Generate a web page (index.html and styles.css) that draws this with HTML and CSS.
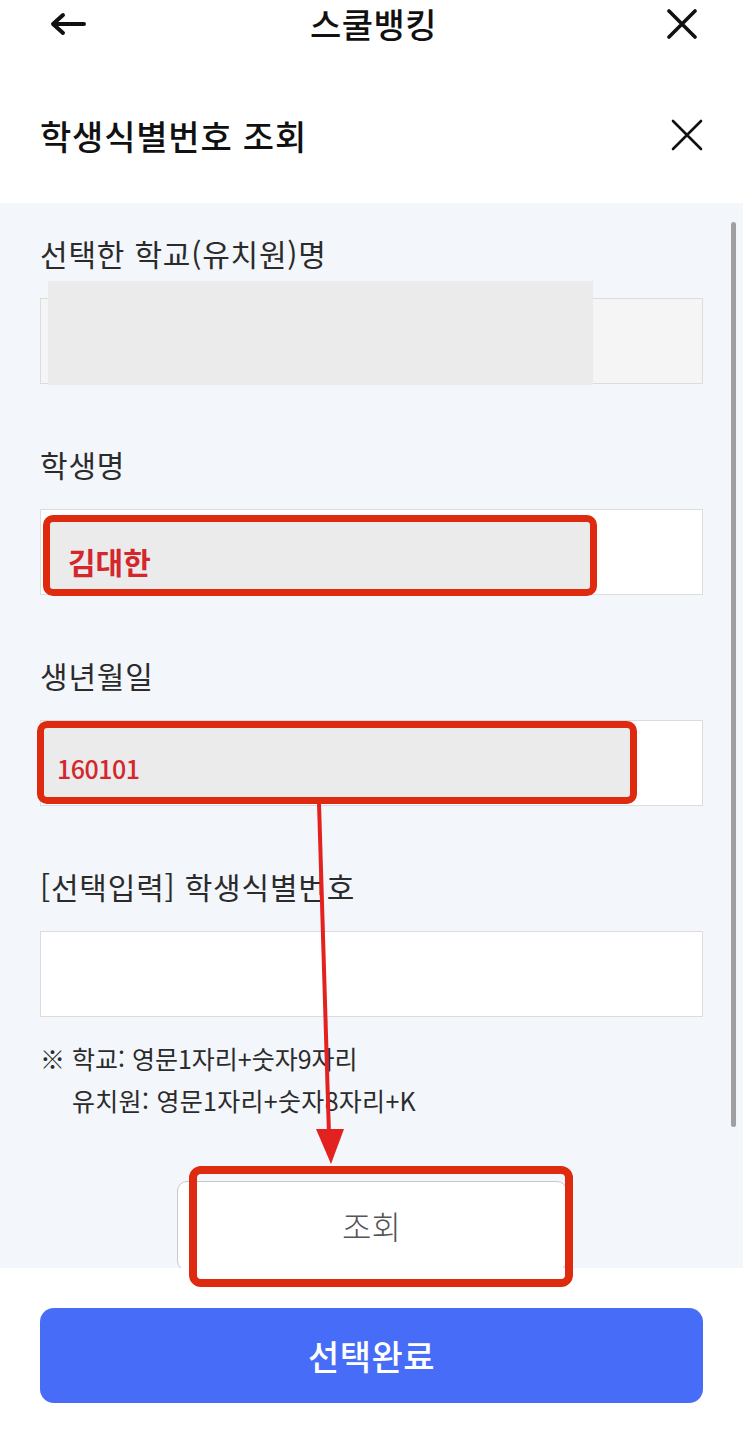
FILE: index.html
```html
<!DOCTYPE html>
<html lang="ko">
<head>
    <meta charset="UTF-8">
    <meta name="viewport" content="width=device-width, initial-scale=1.0">
    <title>스쿨뱅킹</title>
    <link rel="stylesheet" href="styles.css">
</head>
<body>
    <div class="page">
        <!-- Top bar -->
        <div class="topbar">
            <span class="icon-left">
                <svg width="36" height="24" viewBox="0 0 36 24"><path d="M34 12H4M13 3L3 12l10 9" fill="none" stroke="#111" stroke-width="4" stroke-linecap="round" stroke-linejoin="round"/></svg>
            </span>
            <h1 class="app-title">스쿨뱅킹</h1>
            <span class="icon-right">
                <svg width="30" height="30" viewBox="0 0 30 30"><path d="M2 2L28 28M28 2L2 28" stroke="#111" stroke-width="3.6" stroke-linecap="round"/></svg>
            </span>
        </div>

        <!-- Sheet title -->
        <div class="sheet-head">
            <h2>학생식별번호 조회</h2>
            <svg width="32" height="32" viewBox="0 0 32 32"><path d="M2 2L30 30M30 2L2 30" stroke="#111" stroke-width="2.6" stroke-linecap="round"/></svg>
        </div>

        <!-- Form -->
        <div class="panel">
            <div class="field">
                <label>선택한 학교(유치원)명</label>
                <div class="box readonly"></div>
            </div>
            <div class="field">
                <label>학생명</label>
                <div class="box"></div>
            </div>
            <div class="field">
                <label>생년월일</label>
                <div class="box"></div>
            </div>
            <div class="field last">
                <label>[선택입력] 학생식별번호</label>
                <div class="box"></div>
            </div>
            <div class="note">
                <p>※ 학교: 영문1자리+숫자9자리</p>
                <p class="indent">유치원: 영문1자리+숫자8자리+K</p>
            </div>
            <div class="search-row">
                <button class="search-btn">조회</button>
            </div>
            <div class="scrollbar"></div>
        </div>

        <div class="footer">
            <button class="done-btn">선택완료</button>
        </div>

        <!-- Annotations drawn over the screen -->
        <div class="mask mask-school"></div>
        <div class="mark mark-name"><span>김대한</span></div>
        <div class="mark mark-birth"><span>160101</span></div>
        <div class="mark mark-search"></div>
        <svg class="arrow" width="743" height="1440" viewBox="0 0 743 1440">
            <line x1="319" y1="803" x2="329" y2="1135" stroke="#e3211f" stroke-width="4"/>
            <polygon points="316,1129 344,1129 331,1164" fill="#e3211f"/>
        </svg>
    </div>
</body>
</html>
```

FILE: styles.css
```css
body {
    margin: 0;
    background-color: #fff;
    font-family: "Noto Sans CJK KR", "Noto Sans", sans-serif;
    color: #222;
}

.page {
    position: relative;
    width: 743px;
    height: 1440px;
    overflow: hidden;
}

.topbar {
    display: grid;
    grid-template-columns: 1fr auto 1fr;
    align-items: center;
    height: 48px;
    padding: 0 46px 0 50px;
}

.icon-left {
    display: flex;
}

.icon-right {
    display: flex;
    justify-content: flex-end;
}

.app-title {
    margin: 0;
    font-size: 34px;
    font-weight: 500;
    letter-spacing: 0.5px;
    color: #111;
    line-height: 48px;
}

.sheet-head {
    display: flex;
    justify-content: space-between;
    align-items: center;
    box-sizing: border-box;
    height: 155px;
    padding: 19px 40px 0 40px;
}

.sheet-head h2 {
    margin: 0;
    font-size: 34px;
    font-weight: 500;
    letter-spacing: 0.8px;
    color: #111;
}

.panel {
    position: relative;
    height: 1065px;
    box-sizing: border-box;
    padding: 30px 40px 0 40px;
    background-color: #f3f6fa;
    overflow: hidden;
}

.field {
    margin-bottom: 60px;
}

.field.last {
    margin-bottom: 20px;
}

.field label {
    display: block;
    font-size: 30px;
    letter-spacing: 0.8px;
    line-height: 40px;
    color: #2b2b2b;
    margin-bottom: 25px;
}

.box {
    height: 84px;
    border: 1px solid #dcdcdc;
    background-color: #fff;
}

.box.readonly {
    background-color: #f5f5f5;
}

.note p {
    margin: 0;
    font-size: 25px;
    line-height: 42px;
    color: #2b2b2b;
}

.note .indent {
    padding-left: 32px;
    letter-spacing: 0.3px;
}

.search-row {
    display: flex;
    justify-content: center;
    margin-top: 60px;
}

.search-btn {
    width: 390px;
    height: 90px;
    border: 1px solid #c8c8c8;
    border-radius: 10px;
    background-color: #fff;
    font-family: inherit;
    font-size: 32px;
    font-weight: 300;
    color: #555;
    padding-bottom: 4px;
}

.scrollbar {
    position: absolute;
    top: 19px;
    right: 7px;
    width: 5px;
    height: 905px;
    border-radius: 3px;
    background-color: #a0a0a0;
}

.footer {
    box-sizing: border-box;
    height: 172px;
    padding: 40px 40px 0 40px;
    background-color: #fff;
}

.done-btn {
    width: 100%;
    height: 95px;
    border: none;
    border-radius: 14px;
    background-color: #476cf7;
    color: #fff;
    font-family: inherit;
    font-size: 34px;
    font-weight: 500;
    letter-spacing: 0.5px;
}

/* annotation overlays */
.mask {
    position: absolute;
    background-color: #ebebeb;
}

.mask-school {
    left: 48px;
    top: 281px;
    width: 545px;
    height: 104px;
}

.mark {
    position: absolute;
    box-sizing: border-box;
    border: 7px solid #de2a0e;
    border-radius: 10px;
    background-color: #ebebeb;
    display: flex;
    align-items: flex-end;
}

.mark span {
    color: #d4262b;
    font-weight: 700;
    font-size: 30px;
    line-height: 40px;
}

.mark-name {
    left: 43px;
    top: 515px;
    width: 554px;
    height: 81px;
    padding: 0 0 8px 18px;
}

.mark-birth {
    left: 37px;
    top: 721px;
    width: 600px;
    height: 83px;
    padding: 0 0 9px 13px;
}

.mark-birth span {
    font-weight: 500;
    font-size: 25px;
    letter-spacing: -0.5px;
}

.mark-search {
    left: 189px;
    top: 1166px;
    width: 384px;
    height: 121px;
    border-width: 8px;
    border-radius: 12px;
    background-color: transparent;
}

.arrow {
    position: absolute;
    left: 0;
    top: 0;
    pointer-events: none;
}
```
